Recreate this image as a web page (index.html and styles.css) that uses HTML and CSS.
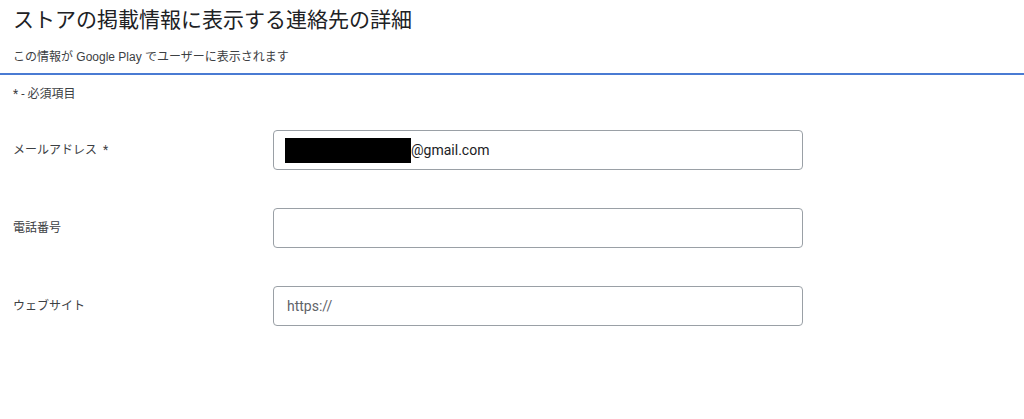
FILE: index.html
```html
<!DOCTYPE html>
<html lang="ja">
<head>
<meta charset="utf-8">
<title>ストアの掲載情報に表示する連絡先の詳細</title>
<link rel="stylesheet" href="styles.css">
</head>
<body>
<header class="header">
  <h1 class="title">ストアの掲載情報に表示する連絡先の詳細</h1>
  <p class="subtitle">この情報が Google Play でユーザーに表示されます</p>
</header>
<p class="required-note">* - 必須項目</p>
<form class="form">
  <div class="row">
    <label class="label">メールアドレス&nbsp; *</label>
    <div class="field"><span class="redact"></span><span class="value">@gmail.com</span></div>
  </div>
  <div class="row">
    <label class="label">電話番号</label>
    <div class="field"></div>
  </div>
  <div class="row">
    <label class="label">ウェブサイト</label>
    <div class="field"><span class="prefix">https://</span></div>
  </div>
</form>
</body>
</html>
```
FILE: styles.css
```css
html, body {
  margin: 0;
  padding: 0;
  background: #fff;
}
body {
  font-family: Roboto, "Noto Sans CJK JP", sans-serif;
  color: #202124;
  width: 1024px;
  height: 419px;
  overflow: hidden;
}
.header {
  border-bottom: 2px solid #4a7bd3;
  padding: 0 13px 6px;
}
.title {
  margin: 0;
  font-size: 21px;
  font-weight: 400;
  line-height: 40px;
  color: #202124;
}
.subtitle {
  margin: 7px 0 0;
  font-family: "Liberation Sans", "Noto Sans CJK JP", sans-serif;
  font-size: 12px;
  line-height: 20px;
  color: #3c4043;
}
.required-note {
  margin: 9px 0 0;
  padding-left: 13px;
  font-size: 12px;
  line-height: 20px;
  color: #3c4043;
}
.form {
  margin-top: 26px;
  display: flex;
  flex-direction: column;
  gap: 38px;
  padding-left: 13px;
}
.row {
  display: flex;
  align-items: center;
  height: 40px;
}
.label {
  width: 260px;
  padding-bottom: 4px;
  font-size: 12px;
  color: #3c4043;
}
.field {
  box-sizing: border-box;
  width: 530px;
  height: 40px;
  border: 1px solid #9aa0a6;
  border-radius: 4px;
  display: flex;
  align-items: center;
  padding-left: 11px;
  font-size: 14px;
}
.redact {
  display: inline-block;
  width: 126px;
  height: 25px;
  background: #000;
}
.value {
  color: #202124;
}
.prefix {
  padding-left: 2px;
  color: #5f6368;
}
```
